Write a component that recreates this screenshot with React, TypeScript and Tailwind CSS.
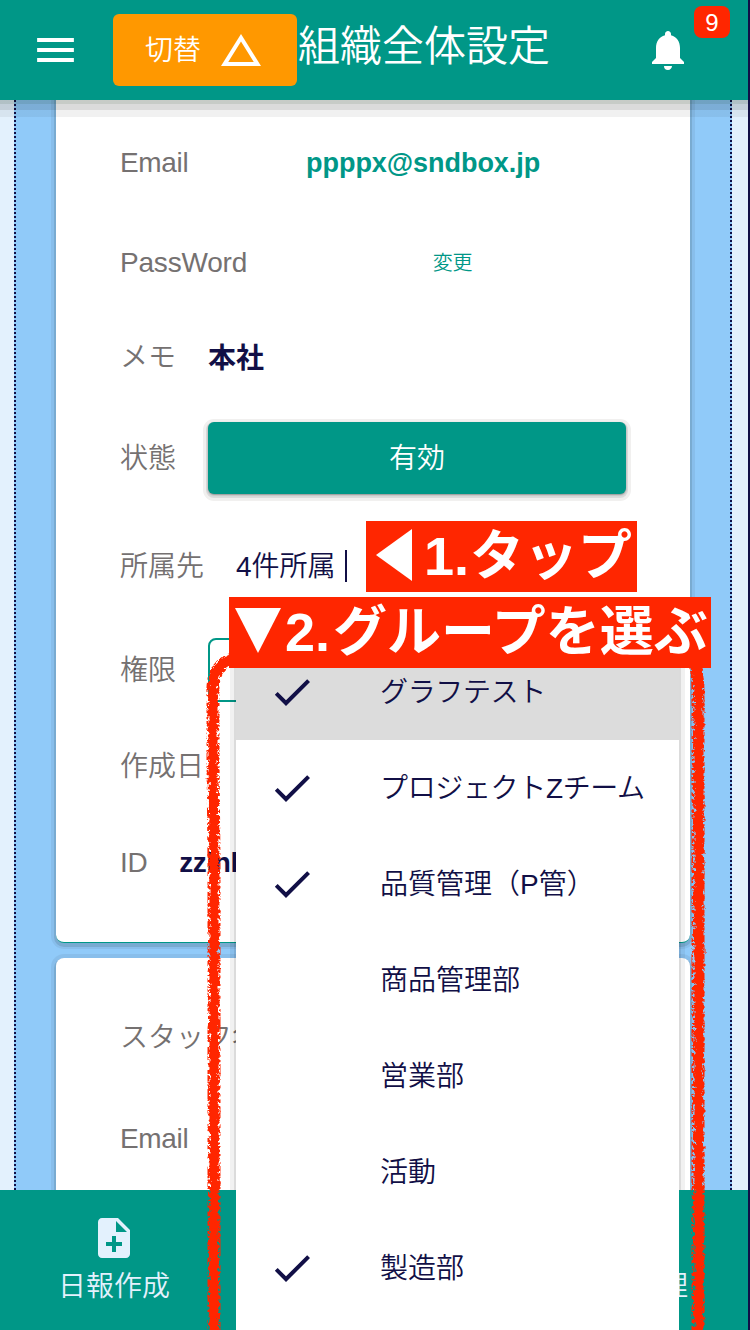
import type { ReactNode } from "react";
import {
  MdChangeHistory,
  MdCheck,
  MdMenu,
  MdNoteAdd,
  MdNotifications,
} from "react-icons/md";

const groups = [
  { name: "グラフテスト", checked: true, active: true, tight: true },
  { name: "プロジェクトZチーム", checked: true, tight: true },
  { name: "品質管理（P管）", checked: true },
  { name: "商品管理部", checked: false },
  { name: "営業部", checked: false },
  { name: "活動", checked: false },
  { name: "製造部", checked: true },
];

function Row({ label, className, children }: { label: string; className: string; children?: ReactNode }) {
  return (
    <div className={`flex shrink-0 items-center gap-8 ${className}`}>
      <span className="shrink-0 pt-[2px] text-[#757171]">{label}</span>
      {children}
    </div>
  );
}

function Header() {
  return (
    <header className="flex h-[100px] w-[748px] shrink-0 items-center bg-[#009787] text-white">
      <MdMenu className="ml-[31px] h-12 w-[49px] shrink-0" preserveAspectRatio="none" />
      <button className="ml-[33px] flex h-[72px] w-[184px] shrink-0 items-center rounded-md bg-[#ff9800] pl-8">
        <span className="w-14 shrink-0 pt-[2px]">切替</span>
        <MdChangeHistory className="ml-4 size-12 shrink-0" />
      </button>
      <h1 className="ml-px w-[346px] shrink-0 pb-[6px] text-[42px] leading-none">組織全体設定</h1>
      <MdNotifications className="size-12 shrink-0" />
      <span className="mb-[56px] ml-[2px] flex h-8 w-9 items-center justify-center rounded-lg bg-[#ff2600] pt-px text-[24px]">
        9
      </span>
    </header>
  );
}

const cardClass =
  "flex shrink-0 flex-col bg-white px-16 shadow-[0_2px_0_2px_rgba(0,20,0,0.11),0_1px_0_5px_rgba(0,0,0,0.055)]";

function Content() {
  return (
    <main className="flex h-[1090px] w-[748px] shrink-0 overflow-hidden bg-[#e3f1fd] px-[14px]">
      <div className="flex w-[718px] shrink-0 flex-col gap-[15px] border-x-2 border-dotted border-[#110f46] bg-[#90caf9] px-10">
        <section className={`${cardClass} h-[843px] rounded-b-lg border-b border-[#009787] pt-3`}>
          <Row label="Email" className="h-[100px] tracking-[-0.35px]">
            <span className="flex-1 pt-[2px] text-center font-bold text-[#009787]">
              <span className="inline-block text-[27px] tracking-[-0.05px]">ppppx@sndbox.jp</span>
            </span>
          </Row>
          <Row label="PassWord" className="h-[100px] tracking-[-0.2px]">
            <span className="flex-1 pt-[2px] text-center text-[20px] text-[#009787]">変更</span>
          </Row>
          <Row label="メモ" className="h-[90px]">
            <span className="pt-[3px] font-bold">本社</span>
          </Row>
          <Row label="状態" className="h-[112px]">
            <button className="h-[72px] flex-1 rounded-md bg-[#009787] pt-[2px] text-white shadow-[0_1px_2px_0_rgba(0,0,0,0.35),0_2px_0_2px_#dcdcdc,0_2px_0_5px_#f1f0ef]">
              有効
            </button>
          </Row>
          <Row label="所属先" className="h-[104px]">
            <span className="flex items-center gap-[9px]">
              <span className="pt-[2px]">4件所属</span>
              <span className="h-8 w-[2px] bg-[#110f46]" />
            </span>
          </Row>
          <Row label="権限" className="h-[104px]">
            <div className="h-16 flex-1 rounded-lg border-2 border-[#009787]" />
          </Row>
          <Row label="作成日" className="h-[88px]" />
          <Row label="ID" className="h-[104px] tracking-[-0.4px]">
            <span className="pt-[2px] font-bold">zzinl</span>
          </Row>
        </section>
        <section className={`${cardClass} h-[300px] rounded-t-lg pt-[29px]`}>
          <Row label="スタッフ名" className="h-[100px]" />
          <Row label="Email" className="h-[102px] tracking-[-0.35px]" />
        </section>
      </div>
    </main>
  );
}

function Footer() {
  return (
    <footer className="relative flex h-[140px] w-[748px] shrink-0 justify-between bg-[#009787] pl-[58px] pr-[60px] text-[#e3f1fd]">
      <div className="flex w-28 flex-col items-center pt-6">
        <MdNoteAdd className="size-12 shrink-0" />
        <span className="leading-[50px]">日報作成</span>
      </div>
      <div className="pt-[72px]">
        <span className="leading-[50px]">管理</span>
      </div>
    </footer>
  );
}

function GroupMenu() {
  return (
    <ul className="absolute left-[236px] top-[644px] h-[686px] w-[443px] bg-white">
      {groups.map((group) => (
        <li key={group.name} className={`flex h-24 items-center pl-8 ${group.active ? "bg-[#dcdcdc]" : "bg-white"}`}>
          <span className="w-28 shrink-0">{group.checked && <MdCheck className="size-12" />}</span>
          <span className={`pt-[2px] ${group.tight ? "tracking-[-0.35px]" : "tracking-normal"}`}>{group.name}</span>
        </li>
      ))}
    </ul>
  );
}

function CrayonOutline() {
  return (
    <svg className="absolute inset-0" width="750" height="1330" viewBox="0 0 750 1330" fill="none" stroke="#ff2600" strokeLinecap="round">
      <defs>
        <filter id="edge" filterUnits="userSpaceOnUse" x="190" y="640" width="540" height="690" colorInterpolationFilters="sRGB">
          <feTurbulence type="fractalNoise" baseFrequency="0.22" numOctaves="3" seed="8" result="wobble" />
          <feDisplacementMap in="SourceGraphic" in2="wobble" scale="7" xChannelSelector="R" yChannelSelector="G" />
        </filter>
        <filter id="grain" filterUnits="userSpaceOnUse" x="190" y="640" width="540" height="690" colorInterpolationFilters="sRGB">
          <feTurbulence type="fractalNoise" baseFrequency="0.3" numOctaves="3" seed="3" result="noise" />
          <feColorMatrix in="noise" type="matrix" values="0 0 0 0 1  0 0 0 0 0.149  0 0 0 0 0  16 0 0 0 -7.6" result="specks" />
          <feComposite in="specks" in2="SourceGraphic" operator="in" />
        </filter>
      </defs>
      <g filter="url(#edge)" strokeWidth="9">
        <path d="M236 658C219 662 212 674 213 692L213 760L214 860L214 1000L214 1120L214 1335" />
        <path d="M692 658C698 667 699 680 699 700L699 900L699 1080L699 1335" />
      </g>
      <g filter="url(#grain)" strokeWidth="13">
        <path d="M236 658C219 662 212 674 213 692L213 760L214 860L214 1000L214 1120L214 1335" />
        <path d="M692 658C698 667 698 680 698 700L698 900L698 1080L698 1335" />
      </g>
    </svg>
  );
}

function Callouts() {
  return (
    <div className="absolute left-[229px] top-[521px] flex w-[482px] flex-col gap-[5px] whitespace-nowrap text-[54px] font-bold leading-[71px] text-white">
      <div className="ml-[137px] flex h-[71px] w-[271px] bg-[#ff2600]">
        <svg className="ml-[10px] mt-[8px] shrink-0" width="36" height="52" viewBox="0 0 36 52" fill="currentColor">
          <path d="M36 0V52L0 26Z" />
        </svg>
        <span className="ml-[12px]">1.<span className="ml-px">タップ</span></span>
      </div>
      <div className="flex h-[71px] bg-[#ff2600]">
        <svg className="ml-[6px] mt-[11px] shrink-0" width="46" height="45" viewBox="0 0 46 45" fill="currentColor">
          <path d="M0 0H46L23 45Z" />
        </svg>
        <span className="ml-[4px]">2.<span className="ml-[3px]">グループを選ぶ</span></span>
      </div>
    </div>
  );
}

export default function App() {
  return (
    <div className="relative flex h-[1330px] w-[750px] flex-col overflow-hidden bg-[#110f46] font-['Liberation_Sans','Noto_Sans_CJK_JP',sans-serif] text-[28px] font-[350] leading-normal text-[#110f46]">
      <Header />
      <Content />
      <div className="absolute left-0 top-[100px] h-[17px] w-[748px] bg-[linear-gradient(rgba(0,20,0,0.22)_0_4px,rgba(0,0,0,0.14)_4px_10px,rgba(0,0,0,0.055)_10px)]" />
      <div className="absolute left-[236px] top-[644px] h-[686px] w-[443px] shadow-[0_0_0_2px_rgba(0,0,0,0.09),0_0_0_6px_rgba(0,0,0,0.055)]" />
      <Footer />
      <GroupMenu />
      <CrayonOutline />
      <Callouts />
    </div>
  );
}
